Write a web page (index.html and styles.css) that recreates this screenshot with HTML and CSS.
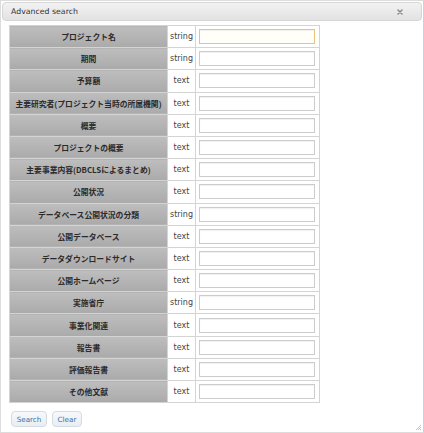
FILE: index.html
```html
<!DOCTYPE html>
<html lang="ja">
<head>
<meta charset="utf-8">
<title>Advanced search</title>
<link rel="stylesheet" href="styles.css">
</head>
<body>
<div class="dialog">
  <div class="titlebar">
    <span class="title">Advanced search</span>
    <span class="close" title="close">
      <svg width="6" height="6" viewBox="0 0 6 6"><path d="M1 1L5 5M5 1L1 5" stroke="#8a8a8a" stroke-width="1.5" stroke-linecap="round"/></svg>
    </span>
  </div>
  <div class="content">
    <table class="search">
      <colgroup><col class="c-label"><col class="c-type"><col class="c-input"></colgroup>
      <tbody>
        <tr><th>プロジェクト名</th><td class="type">string</td><td class="inp"><input class="field focus" type="text"></td></tr>
        <tr><th>期間</th><td class="type">string</td><td class="inp"><input class="field" type="text"></td></tr>
        <tr><th>予算額</th><td class="type">text</td><td class="inp"><input class="field" type="text"></td></tr>
        <tr><th>主要研究者(プロジェクト当時の所属機関)</th><td class="type">text</td><td class="inp"><input class="field" type="text"></td></tr>
        <tr><th>概要</th><td class="type">text</td><td class="inp"><input class="field" type="text"></td></tr>
        <tr><th>プロジェクトの概要</th><td class="type">text</td><td class="inp"><input class="field" type="text"></td></tr>
        <tr><th>主要事業内容(DBCLSによるまとめ)</th><td class="type">text</td><td class="inp"><input class="field" type="text"></td></tr>
        <tr><th>公開状況</th><td class="type">text</td><td class="inp"><input class="field" type="text"></td></tr>
        <tr><th>データベース公開状況の分類</th><td class="type">string</td><td class="inp"><input class="field" type="text"></td></tr>
        <tr><th>公開データベース</th><td class="type">text</td><td class="inp"><input class="field" type="text"></td></tr>
        <tr><th>データダウンロードサイト</th><td class="type">text</td><td class="inp"><input class="field" type="text"></td></tr>
        <tr><th>公開ホームページ</th><td class="type">text</td><td class="inp"><input class="field" type="text"></td></tr>
        <tr><th>実施省庁</th><td class="type">string</td><td class="inp"><input class="field" type="text"></td></tr>
        <tr><th>事業化関連</th><td class="type">text</td><td class="inp"><input class="field" type="text"></td></tr>
        <tr><th>報告書</th><td class="type">text</td><td class="inp"><input class="field" type="text"></td></tr>
        <tr><th>評価報告書</th><td class="type">text</td><td class="inp"><input class="field" type="text"></td></tr>
        <tr><th>その他文献</th><td class="type">text</td><td class="inp"><input class="field" type="text"></td></tr>
      </tbody>
    </table>
    <div class="buttons">
      <button class="btn btn-search" type="button">Search</button>
      <button class="btn btn-clear" type="button">Clear</button>
    </div>
  </div>
  <svg class="grip" width="7" height="7" viewBox="0 0 7 7"><path d="M6 1L1 6M6 3L3 6M6 5L5 6" stroke="#b5b5b5" stroke-width="0.8"/></svg>
</div>
</body>
</html>
```

FILE: styles.css
```css
html, body {
  margin: 0;
  padding: 0;
  background: #ffffff;
}

body {
  font-family: "DejaVu Sans", Verdana, sans-serif;
}

.dialog {
  position: relative;
  box-sizing: border-box;
  width: 424px;
  height: 433px;
  border: 1px solid #dcdcdc;
  border-right-color: #c9d3de;
  padding: 1px;
  background: #fff;
}

.titlebar {
  box-sizing: border-box;
  height: 19px;
  border: 1px solid #d6d6d6;
  border-radius: 4px;
  background: linear-gradient(#f2f2f2, #e2e2e2);
  display: flex;
  align-items: center;
  justify-content: space-between;
  padding: 0 18px 0 8px;
}

.title {
  font-size: 7.8px;
  color: #333;
  line-height: 1;
}

.close {
  display: flex;
  align-items: center;
}

.content {
  padding: 4px 0 0 7px;
}

.search {
  border-collapse: collapse;
  table-layout: fixed;
  width: 310px;
  border: 1px solid #cfcfcf;
}

.c-label { width: 158px; }
.c-type { width: 28px; }
.c-input { width: 124px; }

.search tr {
  height: 22.2px;
}

.search th {
  padding: 0;
  background: linear-gradient(#bebebe, #aaaaaa);
  border: 1px solid #d4d4d4;
  font-family: "Noto Sans CJK JP", "DejaVu Sans", sans-serif;
  font-weight: bold;
  font-size: 7.8px;
  color: #2a2a2a;
  text-align: center;
  white-space: nowrap;
}

.search td {
  padding: 0;
  border: 1px solid #d4d4d4;
}

.type {
  font-size: 8px;
  color: #444;
  text-align: center;
}

.inp {
  padding: 0 3px 0 3px;
}

.field {
  display: block;
  box-sizing: border-box;
  width: 116px;
  height: 15px;
  margin: 0 0 0 3px;
  padding: 0;
  border: 1px solid #cccccc;
  box-shadow: inset 0 1px 1px rgba(0,0,0,0.06);
  background: #fff;
  outline: none;
}

.field.focus {
  border-color: #e7c47a;
  background: #fffef8;
}

.buttons {
  display: flex;
  gap: 5px;
  margin-top: 8px;
  padding-left: 2px;
}

.btn {
  box-sizing: border-box;
  height: 16px;
  padding: 0 4px;
  border: 1px solid #d5dbe2;
  border-radius: 4px;
  background: linear-gradient(#f7f9fb, #e9eef3);
  color: #3672a8;
  font-family: "DejaVu Sans", Verdana, sans-serif;
  font-size: 7.2px;
  line-height: 1;
}

.btn-search { width: 36px; }
.btn-clear { width: 30px; }

.grip {
  position: absolute;
  right: 1px;
  bottom: 1px;
}
```
